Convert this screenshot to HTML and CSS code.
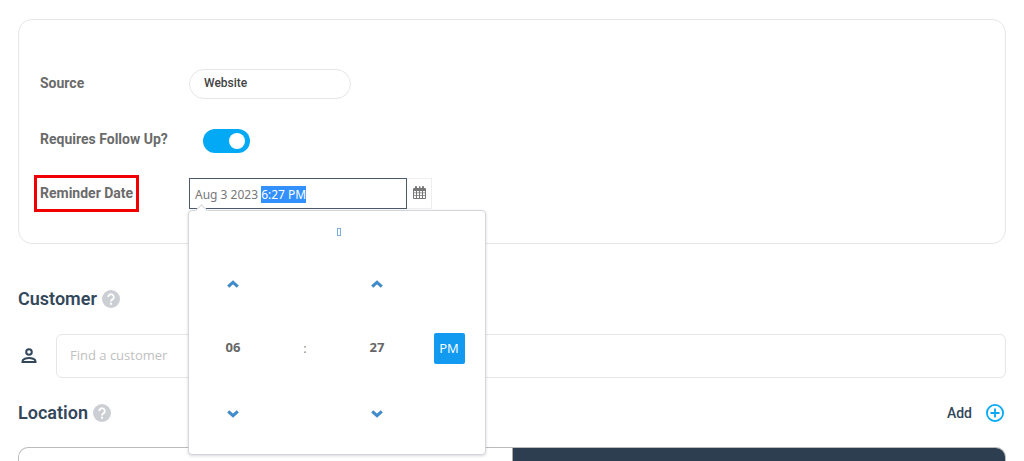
FILE: index.html
```html
<!DOCTYPE html>
<html lang="en">
<head>
<meta charset="utf-8">
<meta name="viewport" content="width=device-width, initial-scale=1">
<title>Customer request</title>
<link rel="stylesheet" href="styles.css">
</head>
<body>
<main class="page">
  <form class="card">
    <label class="label" for="source">Source</label>
    <div class="field">
      <select class="source" id="source"><option>Website</option></select>
    </div>

    <label class="label" for="follow">Requires Follow Up?</label>
    <div class="field toggle-field">
      <input class="toggle" id="follow" type="checkbox" checked>
    </div>

    <label class="label label-marked" for="reminder">Reminder Date</label>
    <div class="field date-field">
      <input class="date-input" id="reminder" type="text" value="Aug 3 2023 6:27 PM" autocomplete="off" spellcheck="false">
      <button class="date-button" type="button" aria-label="Open calendar">
        <svg width="13" height="13" viewBox="0 0 13 13" fill="#777">
          <path fill-rule="evenodd" d="M1 2h1V.8Q2 0 3 0t1 .8V2h2V.8Q6 0 6.500 0t1 .8V2h1.500V.8Q9 0 10 0t1 .8V2h1q1 0 1 1v9q0 1-1 1H1q-1 0-1-1V3q0-1 1-1zM1 5v1.500h2V5zm3 0v1.500h2V5zm3 0v1.500h2V5zm3 0v1.500h2V5zM1 7.300V9.300h2v-2zm3 0v2h2v-2zm3 0v2h2v-2zm3 0v2h2v-2zM1 10v2h2v-2zm3 0v2h2v-2zm3 0v2h2v-2zm3 0v2h2v-2z"/>
        </svg>
      </button>
      <div class="picker">
        <button class="picker-switch" type="button" aria-label="Select date"><span class="missing-glyph"></span></button>
        <div class="picker-grid">
          <button class="step" type="button" aria-label="Increase hour"><svg width="12" height="8" viewBox="0 0 12 8"><path d="M1.200 6.700 6 2.300l4.800 4.400"/></svg></button>
          <span></span>
          <button class="step" type="button" aria-label="Increase minute"><svg width="12" height="8" viewBox="0 0 12 8"><path d="M1.200 6.700 6 2.300l4.800 4.400"/></svg></button>
          <span></span>
          <button class="unit" type="button">06</button>
          <span class="colon">:</span>
          <button class="unit" type="button">27</button>
          <button class="period" type="button">PM</button>
          <button class="step" type="button" aria-label="Decrease hour"><svg width="12" height="8" viewBox="0 0 12 8"><path d="M1.200 1.300 6 5.700l4.800-4.400"/></svg></button>
          <span></span>
          <button class="step" type="button" aria-label="Decrease minute"><svg width="12" height="8" viewBox="0 0 12 8"><path d="M1.200 1.300 6 5.700l4.800-4.400"/></svg></button>
          <span></span>
        </div>
      </div>
    </div>
  </form>

  <section>
    <div class="heading">
      <h2 class="title">Customer</h2>
      <svg class="help" width="18" height="18" viewBox="0 0 18 18"><circle cx="9" cy="9" r="9" fill="#cbced3"/><path d="M6.200 7a2.800 2.800 0 1 1 4.800 2C10 9.900 9 10.300 9 11.500" fill="none" stroke="#fff" stroke-width="1.800"/><path d="M8 12.800h2v2H8z" fill="#fff"/></svg>
    </div>
    <div class="customer-row">
      <svg width="16" height="16" viewBox="0 0 16 16" fill="none" stroke="#33475b" stroke-width="2"><circle cx="8" cy="4" r="2.800"/><path d="M1.500 14v-.8C1.500 11 5.500 10 8 10s6.500 1 6.500 3.200v.8z"/></svg>
      <input class="customer-input" type="text" placeholder="Find a customer" aria-label="Find a customer">
    </div>
  </section>

  <section class="location">
    <div class="heading location-heading">
      <h2 class="title">Location</h2>
      <svg class="help" width="18" height="18" viewBox="0 0 18 18"><circle cx="9" cy="9" r="9" fill="#cbced3"/><path d="M6.200 7a2.800 2.800 0 1 1 4.800 2C10 9.900 9 10.300 9 11.500" fill="none" stroke="#fff" stroke-width="1.800"/><path d="M8 12.800h2v2H8z" fill="#fff"/></svg>
      <button class="add" type="button">Add
        <svg width="18" height="18" viewBox="0 0 18 18" fill="none" stroke="#03a9f4"><circle cx="9" cy="9" r="8.100" stroke-width="1.800"/><path d="M9 4.500v9M4.500 9h9" stroke-width="1.800"/></svg>
      </button>
    </div>
    <div class="panel"><div class="panel-light"></div><div class="panel-dark"></div></div>
  </section>
</main>
<script src="script.js"></script>
</body>
</html>
```
FILE: styles.css
```css
* { box-sizing: border-box; }

body {
  margin: 0;
  background: #fff;
  font-family: "Open Sans", sans-serif;
  font-size: 13px;
  color: #666;
}

button, input, select { font: inherit; color: inherit; margin: 0; }

button {
  padding: 0;
  border: 0;
  background: none;
  display: flex;
  align-items: center;
  justify-content: center;
}

.page {
  display: flex;
  flex-direction: column;
  min-height: 100vh;
  padding: 19px 18px 0;
}

.card {
  display: grid;
  grid-template-columns: 149px 1fr;
  row-gap: 26px;
  padding: 49px 21px 34px;
  border: 1px solid #e6e6e6;
  border-radius: 14px;
}

.label {
  justify-self: start;
  height: 25px;
  line-height: 25px;
  margin-top: 2px;
  font-family: Roboto, sans-serif;
  font-size: 14px;
  font-weight: 700;
  color: #6b6b6b;
}

.label-marked { outline: 3px solid #f00000; outline-offset: 3px; }

.field { display: flex; }

.source {
  appearance: none;
  width: 162px;
  height: 30px;
  padding: 0 14px 2px;
  border: 1px solid #e6e6e6;
  border-radius: 15px;
  background: #fff;
  font-family: Roboto, sans-serif;
  font-size: 12px;
  font-weight: 500;
  color: #444;
}

.toggle-field { padding: 4px 0 0 14px; }

.toggle {
  appearance: none;
  display: flex;
  align-items: center;
  width: 47px;
  height: 24px;
  padding: 0 5px;
  border-radius: 12px;
  background: #c4c4c4;
}

.toggle::before {
  content: "";
  width: 16px;
  height: 16px;
  border-radius: 50%;
  background: #fff;
}

.toggle:checked { justify-content: flex-end; background: #03a9f4; }

.date-field { position: relative; margin-top: -1px; }

.date-input {
  width: 218px;
  height: 31px;
  padding: 2px 5px 0;
  border: 1px solid #4d5a6b;
  outline: 0;
  background: #fff;
  font-family: "Noto Sans", sans-serif;
  font-size: 12px;
  color: #777;
}

.date-input::selection { background: #3390ff; color: #fff; }

.date-button {
  width: 25px;
  padding-bottom: 2px;
  border: 1px solid #eee;
  border-left: 0;
}

.picker {
  position: absolute;
  z-index: 1;
  top: 32px;
  left: -1px;
  width: 298px;
  padding: 0 0 7px;
  border: 1px solid #d5d6dc;
  border-radius: 4px;
  background: #fff;
  box-shadow: 0 1px 3px rgba(60, 65, 90, 0.2);
}

.picker::before {
  content: "";
  position: absolute;
  top: -5px;
  left: 8px;
  width: 8px;
  height: 8px;
  border: solid #d5d6dc;
  border-width: 1px 0 0 1px;
  background: #fff;
  transform: rotate(45deg);
}

.picker-switch { width: 100%; height: 42px; padding-left: 3px; }

.missing-glyph { width: 4px; height: 8px; border: 1px solid #7aaee0; }

.picker-grid {
  display: grid;
  grid-template-columns: 88px 56px 88px 56px;
  grid-template-rows: 62px 66px 66px;
  align-items: center;
  justify-items: center;
}

.step { width: 54px; height: 54px; }

.step path { fill: none; stroke: #428bca; stroke-width: 3; }

.unit { width: 54px; height: 54px; padding-bottom: 2px; font-weight: 700; }

.colon { color: #888; }

.period {
  width: 31px;
  height: 31px;
  border-radius: 2px;
  background: #129af0;
  color: #fff;
}

.heading { display: flex; align-items: center; height: 28px; margin-top: 41px; }

.title {
  margin: 0 5px 0 0;
  font-family: Roboto, sans-serif;
  font-size: 18px;
  font-weight: 600;
  line-height: 28px;
  color: #33475b;
}

.customer-row {
  display: flex;
  align-items: center;
  gap: 19px;
  margin-top: 21px;
  padding-left: 3px;
}

.customer-input {
  flex: 1;
  min-width: 0;
  height: 44px;
  padding: 0 13px 2px;
  border: 1px solid #e6e6e6;
  border-radius: 6px;
  outline: 0;
}

.customer-input::placeholder { color: #bfbfbf; }

.location { display: flex; flex: 1; flex-direction: column; }

.location-heading { margin-top: 21px; }

.add {
  gap: 14px;
  margin-left: auto;
  margin-right: 2px;
  font-family: Roboto, sans-serif;
  font-size: 14px;
  font-weight: 500;
  color: #33475b;
}

.panel {
  display: grid;
  flex: 1;
  grid-template-columns: 1fr 1fr;
  min-height: 13px;
  margin-top: 20px;
  overflow: hidden;
  border: 1px solid #bbb;
  border-bottom: 0;
  border-radius: 10px 10px 0 0;
}

.panel-dark { border-left: 1px solid #aaa; background: #2c3e50; }
```
FILE: script.js
```js
const reminder = document.getElementById("reminder");
reminder.focus();
reminder.setSelectionRange(reminder.value.indexOf("6:27"), reminder.value.length);
```
